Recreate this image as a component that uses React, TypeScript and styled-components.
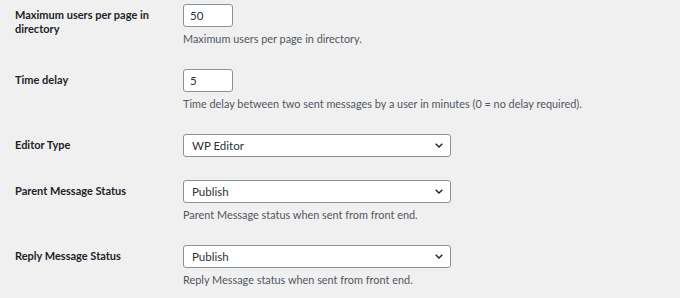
import React from "react";
import styled, { createGlobalStyle } from "styled-components";

const GlobalStyle = createGlobalStyle`
  html, body {
    margin: 0;
    padding: 0;
    background: #f0f0f1;
  }
  body {
    font-family: Lato, "Noto Sans", sans-serif;
    color: #1d2327;
  }
`;

type Field = {
  label: string;
  kind: "text" | "select";
  value: string;
  note?: string;
};

const fields: Field[] = [
  {
    label: "Maximum users per page in directory",
    kind: "text",
    value: "50",
    note: "Maximum users per page in directory.",
  },
  {
    label: "Time delay",
    kind: "text",
    value: "5",
    note: "Time delay between two sent messages by a user in minutes (0 = no delay required).",
  },
  { label: "Editor Type", kind: "select", value: "WP Editor" },
  {
    label: "Parent Message Status",
    kind: "select",
    value: "Publish",
    note: "Parent Message status when sent from front end.",
  },
  {
    label: "Reply Message Status",
    kind: "select",
    value: "Publish",
    note: "Reply Message status when sent from front end.",
  },
];

export default function App() {
  return (
    <>
      <GlobalStyle />
      <Form>
        {fields.map((f) => (
          <Row key={f.label}>
            <Label>{f.label}</Label>
            <Cell>
              {f.kind === "text" ? (
                <TextBox>{f.value}</TextBox>
              ) : (
                <SelectBox>
                  <span>{f.value}</span>
                  <Chevron viewBox="0 0 8 5">
                    <path d="M0.7 0.7 L4 4 L7.3 0.7" />
                  </Chevron>
                </SelectBox>
              )}
              {f.note && <Note>{f.note}</Note>}
            </Cell>
          </Row>
        ))}
      </Form>
    </>
  );
}

const Form = styled.div`
  display: flex;
  flex-direction: column;
  gap: 23px;
  padding: 4px 0 0 15px;
`;

const Row = styled.div`
  display: flex;
  align-items: flex-start;
`;

const Label = styled.div`
  width: 150px;
  margin-right: 18px;
  padding-top: 4px;
  font-size: 11px;
  line-height: 14px;
  font-weight: 700;
  color: #1d2327;
`;

const Cell = styled.div`
  display: flex;
  flex-direction: column;
  align-items: flex-start;
`;

const Field = styled.div`
  box-sizing: border-box;
  height: 23px;
  display: flex;
  align-items: center;
  background: #fff;
  border: 1px solid #8c8f94;
  border-radius: 3px;
  font-size: 11.5px;
  color: #2c3338;
`;

const TextBox = styled(Field)`
  width: 50px;
  padding: 0 6px;
`;

const SelectBox = styled(Field)`
  width: 268px;
  padding: 0 7px 0 8px;
  justify-content: space-between;
`;

const Chevron = styled.svg`
  width: 8px;
  height: 5px;
  fill: none;
  stroke: #1d2327;
  stroke-width: 1.4;
`;

const Note = styled.p`
  margin: 4px 0 0;
  font-size: 10.9px;
  line-height: 15px;
  color: #50575e;
`;
